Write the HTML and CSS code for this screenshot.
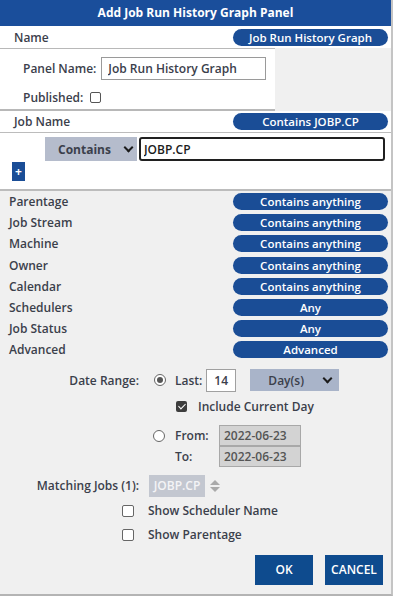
FILE: index.html
```html
<!DOCTYPE html>
<html lang="en">
<head>
  <meta charset="UTF-8">
  <meta name="viewport" content="width=device-width, initial-scale=1.0">
  <title>Add Job Run History Graph Panel</title>
  <link rel="stylesheet" href="styles.css">
</head>
<body>
  <div class="dialog">
    <div class="title">Add Job Run History Graph Panel</div>

    <div class="head-row first">
      <span class="head-label">Name</span>
      <span class="pill">Job Run History Graph</span>
    </div>
    <div class="name-panel">
      <div class="field">
        <label>Panel Name:</label>
        <input class="text-input" type="text" value="Job Run History Graph">
      </div>
      <div class="field">
        <label>Published:</label>
        <span class="box"></span>
      </div>
    </div>

    <div class="head-row">
      <span class="head-label">Job Name</span>
      <span class="pill">Contains JOBP.CP</span>
    </div>
    <div class="filter">
      <div class="filter-line">
        <div class="select">Contains <span class="chev"></span></div>
        <input class="filter-input" type="text" value="JOBP.CP">
      </div>
      <div class="plus">+</div>
    </div>

    <div class="crit">
      <div class="crit-row"><span>Parentage</span><span class="pill">Contains anything</span></div>
      <div class="crit-row"><span>Job Stream</span><span class="pill">Contains anything</span></div>
      <div class="crit-row"><span>Machine</span><span class="pill">Contains anything</span></div>
      <div class="crit-row"><span>Owner</span><span class="pill">Contains anything</span></div>
      <div class="crit-row"><span>Calendar</span><span class="pill">Contains anything</span></div>
      <div class="crit-row"><span>Schedulers</span><span class="pill">Any</span></div>
      <div class="crit-row"><span>Job Status</span><span class="pill">Any</span></div>
      <div class="crit-row"><span>Advanced</span><span class="pill">Advanced</span></div>
    </div>

    <div class="dates">
      <div class="drow">
        <span class="dlabel">Date Range:</span>
        <span class="radio on"></span>
        <span class="small">Last:</span>
        <span class="num">14</span>
        <div class="days">Day(s) <span class="chev"></span></div>
      </div>
      <div class="drow sub">
        <span class="check"></span>
        <span>Include Current Day</span>
      </div>
      <div class="range">
        <span class="radio"></span>
        <div class="range-grid">
          <span>From:</span><span class="date">2022-06-23</span>
          <span>To:</span><span class="date">2022-06-23</span>
        </div>
      </div>
      <div class="drow match">
        <span class="dlabel">Matching Jobs (1):</span>
        <span class="job">JOBP.CP</span>
        <span class="spin"><i class="up"></i><i class="down"></i></span>
      </div>
      <div class="opt opt-first"><span class="box"></span>Show Scheduler Name</div>
      <div class="opt"><span class="box"></span>Show Parentage</div>
    </div>

    <div class="buttons">
      <button class="btn">OK</button>
      <button class="btn">CANCEL</button>
    </div>
  </div>
</body>
</html>
```

FILE: styles.css
```css
*{
  margin: 0;
  padding: 0;
  box-sizing: border-box;
}
body{
  background: #ffffff;
  font-family: "Open Sans", "Noto Sans", sans-serif;
  font-size: 12px;
  color: #3b404b;
}
.dialog{
  width: 393px;
  height: 596px;
  background: #f0f0f0;
  border-right: 2px solid #c4c4c4;
  border-bottom: 2px solid #b4b4b4;
  display: flex;
  flex-direction: column;
}
.title{
  height: 26px;
  background: #1a4e9b;
  color: #fff;
  font-weight: 700;
  font-size: 12px;
  text-align: center;
  line-height: 26px;
}
.head-row{
  height: 21px;
  background: #fff;
  display: flex;
  align-items: center;
  justify-content: space-between;
  padding: 0 3px 0 14px;
  font-weight: 600;
}
.head-row.first{
  height: 22px;
}
.pill{
  width: 155px;
  height: 17px;
  border-radius: 9px;
  background: #1a4d96;
  color: #fff;
  font-weight: 600;
  font-size: 11.5px;
  line-height: 17px;
  text-align: center;
}
.name-panel{
  width: 275px;
  height: 63px;
  background: #fff;
  border-top: 1px solid #b8b8b8;
  border-bottom: 2px solid #b8b8b8;
  padding: 8px 0 0 23px;
  display: flex;
  flex-direction: column;
  gap: 9px;
}
.field{
  display: flex;
  align-items: center;
  gap: 5px;
  font-weight: 600;
}
.text-input{
  width: 165px;
  height: 23px;
  border: 1px solid #9a9a9a;
  padding: 0 6px;
  font: 600 12px "Open Sans", sans-serif;
  color: #3b404b;
}
.box{
  width: 11px;
  height: 11px;
  border: 1.5px solid #555;
  border-radius: 2px;
  background: #fff;
  display: inline-block;
}
.field .box{
  margin-left: 2px;
}
.filter{
  height: 59px;
  background: #fff;
  border-top: 1px solid #bcbcbc;
  border-bottom: 2px solid #bcbcbc;
  padding: 4px 0 0 12px;
}
.filter-line{
  display: flex;
  align-items: center;
  gap: 2px;
  padding-left: 33px;
}
.select{
  width: 92px;
  height: 24px;
  background: #b5bccc;
  font-weight: 700;
  font-size: 12px;
  padding-left: 13px;
  display: flex;
  align-items: center;
  justify-content: space-between;
  padding-right: 5px;
}
.chev{
  width: 7px;
  height: 7px;
  border-right: 2.5px solid #1c1c1c;
  border-bottom: 2.5px solid #1c1c1c;
  transform: rotate(45deg);
  margin-top: -4px;
}
.filter-input{
  width: 246px;
  height: 24px;
  border: 2px solid #202020;
  border-radius: 3px;
  padding: 0 3px;
  font: 600 12px "Open Sans", sans-serif;
  color: #1c1c1c;
}
.plus{
  width: 13px;
  height: 19px;
  margin-top: 1px;
  background: #1a4d96;
  color: #fff;
  font-weight: 700;
  font-size: 12px;
  line-height: 19px;
  text-align: center;
}
.crit{
  padding: 0 3px 0 9px;
  display: flex;
  flex-direction: column;
}
.crit-row{
  height: 21.2px;
  display: flex;
  align-items: center;
  justify-content: space-between;
  font-weight: 600;
}
.dates{
  padding-top: 8px;
  display: flex;
  flex-direction: column;
  font-weight: 600;
}
.drow{
  display: flex;
  align-items: center;
  height: 23px;
}
.dlabel{
  width: 139px;
  text-align: right;
  margin-right: 15px;
}
.radio{
  width: 12px;
  height: 12px;
  border: 1.5px solid #666;
  border-radius: 50%;
  background: #fff;
  display: inline-block;
  position: relative;
}
.radio.on::after{
  content: "";
  position: absolute;
  left: 1.5px;
  top: 1.5px;
  width: 6px;
  height: 6px;
  border-radius: 50%;
  background: #555;
}
.small{
  margin-left: 9px;
}
.num{
  width: 30px;
  height: 23px;
  margin-left: 4px;
  border: 1px solid #a0a0a0;
  background: #fff;
  line-height: 21px;
  padding-left: 7px;
}
.days{
  width: 89px;
  height: 22px;
  margin-left: 14px;
  background: #a9b4c9;
  display: flex;
  align-items: center;
  justify-content: space-between;
  padding: 0 8px 0 18px;
  font-size: 12px;
}
.sub{
  padding-left: 176px;
  gap: 11px;
  margin-top: 3px;
}
.check{
  width: 11px;
  height: 11px;
  border-radius: 2px;
  background: #3d3d3d;
  position: relative;
}
.check::after{
  content: "";
  position: absolute;
  left: 3.5px;
  top: 1px;
  width: 3px;
  height: 6px;
  border-right: 1.5px solid #fff;
  border-bottom: 1.5px solid #fff;
  transform: rotate(45deg);
}
.range{
  display: flex;
  align-items: flex-start;
  padding-left: 153px;
  margin-top: 7px;
  gap: 10px;
}
.range .radio{
  margin-top: 5px;
}
.range-grid{
  display: grid;
  grid-template-columns: 44px 82px;
  align-items: center;
}
.date{
  height: 21px;
  background: #d3d3d3;
  border: 1px solid #a8a8a8;
  color: #555;
  line-height: 19px;
  padding-left: 4px;
}
.match{
  margin-top: 8px;
  height: 22px;
}
.match .dlabel{
  margin-right: 10px;
}
.job{
  width: 56px;
  height: 22px;
  background: #c3c7d0;
  color: #f4f4f6;
  line-height: 22px;
  text-align: center;
}
.spin{
  display: flex;
  flex-direction: column;
  gap: 2px;
  margin-left: 5px;
}
.spin i{
  width: 0;
  height: 0;
  border-left: 5px solid transparent;
  border-right: 5px solid transparent;
}
.spin .up{
  border-bottom: 5px solid #aaa;
}
.spin .down{
  border-top: 5px solid #aaa;
}
.opt{
  display: flex;
  align-items: center;
  gap: 14px;
  padding-left: 122px;
  height: 24px;
}
.opt-first{
  margin-top: 2px;
}
.opt .box{
  width: 12px;
  height: 12px;
  border-color: #666;
}
.buttons{
  display: flex;
  justify-content: flex-end;
  gap: 12px;
  padding: 8px 8px 0 0;
}
.btn{
  width: 58px;
  height: 30px;
  border: none;
  background: #0e4b8e;
  color: #fff;
  font: 600 12px "Open Sans", sans-serif;
}
```
